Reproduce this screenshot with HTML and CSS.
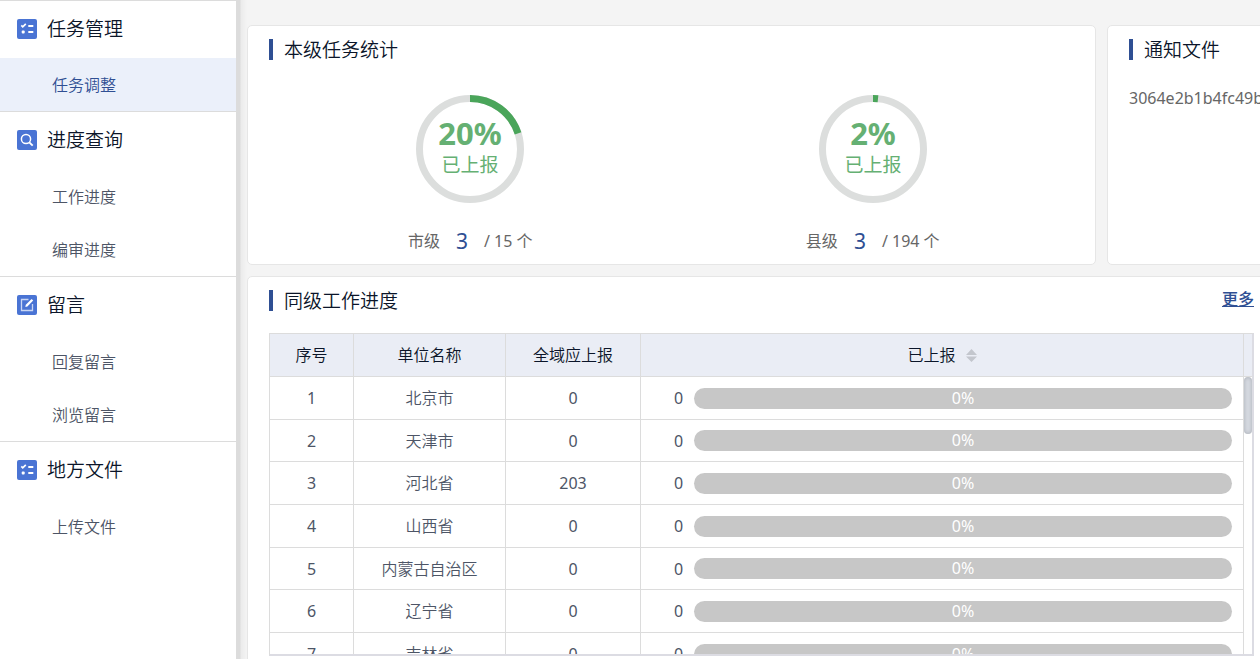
FILE: index.html
```html
<!DOCTYPE html>
<html lang="zh-CN">
<head>
<meta charset="utf-8">
<title>任务管理</title>
<link rel="stylesheet" href="styles.css">
</head>
<body>
<svg class="sprite" aria-hidden="true">
  <symbol id="icon-list" viewBox="0 0 20 20">
    <rect width="20" height="20" rx="2" fill="#4a74d4"/>
    <path d="M4.3 6.3l1.5 1.6 3-3" fill="none" stroke="#fff" stroke-width="1.7"/>
    <path d="M11.3 7h5M11.3 13h5" stroke="#fff" stroke-width="1.8"/>
    <rect x="4.7" y="11.5" width="3" height="3" rx="1" fill="#fff"/>
  </symbol>
  <symbol id="icon-search" viewBox="0 0 20 20">
    <rect width="20" height="20" rx="2" fill="#4a74d4"/>
    <circle cx="9" cy="9" r="4.6" fill="none" stroke="#fff" stroke-width="1.5"/>
    <path d="M12.3 12.3l3.4 3.4" stroke="#fff" stroke-width="1.9"/>
  </symbol>
  <symbol id="icon-edit" viewBox="0 0 20 20">
    <rect width="20" height="20" rx="2" fill="#4a74d4"/>
    <path d="M11.5 4.5h-7v11h11V9" fill="none" stroke="#c9d6f4" stroke-width="1.3"/>
    <path d="M8.3 12l.5-2.2 5.8-5.9 1.6 1.6-5.8 5.9z" fill="#fff"/>
  </symbol>
</svg>
<div class="app">
  <nav class="sidebar">
    <section class="menu-group">
      <h2 class="menu-title"><svg class="menu-icon"><use href="#icon-list"/></svg>任务管理</h2>
      <a class="menu-item active" href="#">任务调整</a>
    </section>
    <section class="menu-group">
      <h2 class="menu-title"><svg class="menu-icon"><use href="#icon-search"/></svg>进度查询</h2>
      <a class="menu-item" href="#">工作进度</a>
      <a class="menu-item" href="#">编审进度</a>
    </section>
    <section class="menu-group">
      <h2 class="menu-title"><svg class="menu-icon"><use href="#icon-edit"/></svg>留言</h2>
      <a class="menu-item" href="#">回复留言</a>
      <a class="menu-item" href="#">浏览留言</a>
    </section>
    <section class="menu-group">
      <h2 class="menu-title"><svg class="menu-icon"><use href="#icon-list"/></svg>地方文件</h2>
      <a class="menu-item" href="#">上传文件</a>
    </section>
  </nav>
  <div class="shade"></div>
  <main class="main">
    <div class="top-row">
      <section class="card">
        <h3 class="card-title">本级任务统计</h3>
        <div class="gauges">
          <div class="gauge">
            <svg class="ring" viewBox="0 0 108 108">
              <circle class="ring-track" cx="54" cy="54" r="50.5"/>
              <circle class="ring-value" cx="54" cy="54" r="50.5" pathLength="100" stroke-dasharray="20 80" transform="rotate(-90 54 54)"/>
              <text class="ring-percent" x="54" y="50">20%</text>
              <text class="ring-label" x="54" y="77">已上报</text>
            </svg>
            <p class="gauge-count"><span>市级</span><strong>3</strong><span>/ 15 个</span></p>
          </div>
          <div class="gauge">
            <svg class="ring" viewBox="0 0 108 108">
              <circle class="ring-track" cx="54" cy="54" r="50.5"/>
              <circle class="ring-value" cx="54" cy="54" r="50.5" pathLength="100" stroke-dasharray="1.6 98.4" transform="rotate(-90 54 54)"/>
              <text class="ring-percent" x="54" y="50">2%</text>
              <text class="ring-label" x="54" y="77">已上报</text>
            </svg>
            <p class="gauge-count"><span>县级</span><strong>3</strong><span>/ 194 个</span></p>
          </div>
        </div>
      </section>
      <section class="card">
        <h3 class="card-title">通知文件</h3>
        <p class="notice">3064e2b1b4fc49b</p>
      </section>
    </div>
    <section class="card progress-card">
      <header class="card-head">
        <h3 class="card-title">同级工作进度</h3>
        <a class="more" href="#">更多</a>
      </header>
      <div class="table-box">
        <table class="table">
          <colgroup><col class="col-no"><col class="col-name"><col class="col-due"><col></colgroup>
          <thead>
            <tr><th>序号</th><th>单位名称</th><th>全域应上报</th><th><span class="sortable">已上报<svg class="sort" viewBox="0 0 11 13"><path d="M0 6L5.5 0 11 6zM0 7.5h11L5.5 13z" fill="#c3c6cd"/></svg></span></th></tr>
          </thead>
          <tbody>
            <tr><td>1</td><td class="name">北京市</td><td>0</td><td><div class="report"><span>0</span><div class="bar">0%</div></div></td></tr>
            <tr><td>2</td><td class="name">天津市</td><td>0</td><td><div class="report"><span>0</span><div class="bar">0%</div></div></td></tr>
            <tr><td>3</td><td class="name">河北省</td><td>203</td><td><div class="report"><span>0</span><div class="bar">0%</div></div></td></tr>
            <tr><td>4</td><td class="name">山西省</td><td>0</td><td><div class="report"><span>0</span><div class="bar">0%</div></div></td></tr>
            <tr><td>5</td><td class="name">内蒙古自治区</td><td>0</td><td><div class="report"><span>0</span><div class="bar">0%</div></div></td></tr>
            <tr><td>6</td><td class="name">辽宁省</td><td>0</td><td><div class="report"><span>0</span><div class="bar">0%</div></div></td></tr>
            <tr><td>7</td><td class="name">吉林省</td><td>0</td><td><div class="report"><span>0</span><div class="bar">0%</div></div></td></tr>
          </tbody>
        </table>
        <div class="gutter"><div class="gutter-head"></div><div class="thumb"></div></div>
      </div>
    </section>
  </main>
</div>
</body>
</html>
```
FILE: styles.css
```css
* { box-sizing: border-box; }

body {
  margin: 0;
  overflow: hidden;
  background: #f4f4f4;
  color: #4d5566;
  font: 350 16px/24px "Noto Sans", "Noto Sans CJK SC", sans-serif;
}

h2, h3, p { margin: 0; font-weight: 350; }
a { color: inherit; text-decoration: none; }
.sprite { display: none; }

.app { display: flex; height: 100vh; }

/* Sidebar */
.sidebar { flex: 0 0 236px; background: #fff; }
.menu-group { border-top: 1px solid #dcdcdc; }
.menu-title {
  display: flex;
  align-items: center;
  gap: 10px;
  height: 58px;
  padding: 0 0 2px 17px;
  color: #0b1529;
  font-size: 19px;
}
.menu-group:first-child .menu-title { height: 57px; }
.menu-icon { width: 20px; height: 20px; }
.menu-item {
  display: flex;
  align-items: center;
  height: 53px;
  padding-left: 52px;
}
.menu-item.active { background: #ebf0fa; color: #2f4f93; }

.shade {
  flex: 0 0 11px;
  background: linear-gradient(90deg, #dcdcdc 4px, #ebebeb 5px, #f4f4f4 11px);
}

/* Content */
.main {
  flex: 1;
  display: flex;
  flex-direction: column;
  gap: 11px;
  min-width: 0;
  margin: 25px -16px -20px 0;
}
.top-row { display: grid; grid-template-columns: minmax(0, 1fr) 169px; gap: 11px; }
.card {
  min-width: 0;
  padding: 13px 21px 9px;
  overflow: hidden;
  background: #fff;
  border: 1px solid #e6e6e6;
  border-radius: 5px;
}
.card-title {
  display: flex;
  align-items: center;
  gap: 11px;
  height: 21px;
  color: #0b1529;
  font-size: 19px;
  white-space: nowrap;
}
.card-title::before { content: ""; width: 4px; height: 21px; background: #2f4f93; }

.gauges { display: grid; grid-template-columns: 1fr 1fr; padding-top: 35px; }
.gauge { display: flex; flex-direction: column; align-items: center; gap: 24px; }
.ring { width: 108px; height: 108px; }
.ring-track, .ring-value { fill: none; stroke-width: 7px; }
.ring-track { stroke: #dcdedd; }
.ring-value { stroke: #4aa55a; }
.ring-percent, .ring-label { fill: #65b073; text-anchor: middle; }
.ring-percent { font-size: 31px; font-weight: 700; }
.ring-label { font-size: 19px; font-weight: 400; }
.gauge-count { display: flex; align-items: center; gap: 16px; height: 28px; color: #666; font-weight: 400; }
.gauge-count strong { color: #2f4f93; font-size: 21px; font-weight: 400; }

.notice { padding-top: 26px; color: #666; font-weight: 400; }

/* Progress table */
.progress-card { flex: 1; display: flex; flex-direction: column; min-height: 0; padding-bottom: 22px; }
.card-head { display: flex; justify-content: space-between; align-items: center; height: 21px; }
.more { padding-bottom: 3px; color: #2f4f93; font-weight: 500; text-decoration: underline; }
.table-box {
  flex: 1;
  display: flex;
  min-height: 0;
  margin-top: 22px;
  overflow: hidden;
  border: solid #dcdcdc;
  border-width: 1px 2px 2px 1px;
  border-right-color: #dcdce3;
  border-bottom-color: #dcdce3;
}
.table {
  flex: 1;
  align-self: flex-start;
  table-layout: fixed;
  border-collapse: separate;
  border-spacing: 0;
  text-align: center;
}
.col-no { width: 84px; }
.col-name { width: 152px; }
.col-due { width: 135px; }
th, td { height: 43px; padding: 0; border: solid #dcdcdc; border-width: 0 1px 1px 0; font-weight: 400; }
th { background: #eaedf5; color: #0b1529; }
th, .name { font-weight: 350; }
tbody tr:nth-child(3n+2) td { height: 42px; }
.sortable { display: inline-flex; align-items: center; gap: 10px; }
.sort { width: 11px; height: 13px; }
.report { display: flex; align-items: center; gap: 11px; padding: 0 11px 0 33px; }
.bar { flex: 1; height: 21px; border-radius: 11px; background: #c7c7c7; color: #fff; line-height: 21px; }

.gutter { flex: 0 0 8px; }
.gutter-head { height: 43px; background: #eaedf5; border-bottom: 1px solid #dcdcdc; }
.thumb {
  height: 57px;
  border-radius: 5px;
  background: #d6dae1;
  box-shadow: inset 0 0 4px #a9adb5;
}
```
